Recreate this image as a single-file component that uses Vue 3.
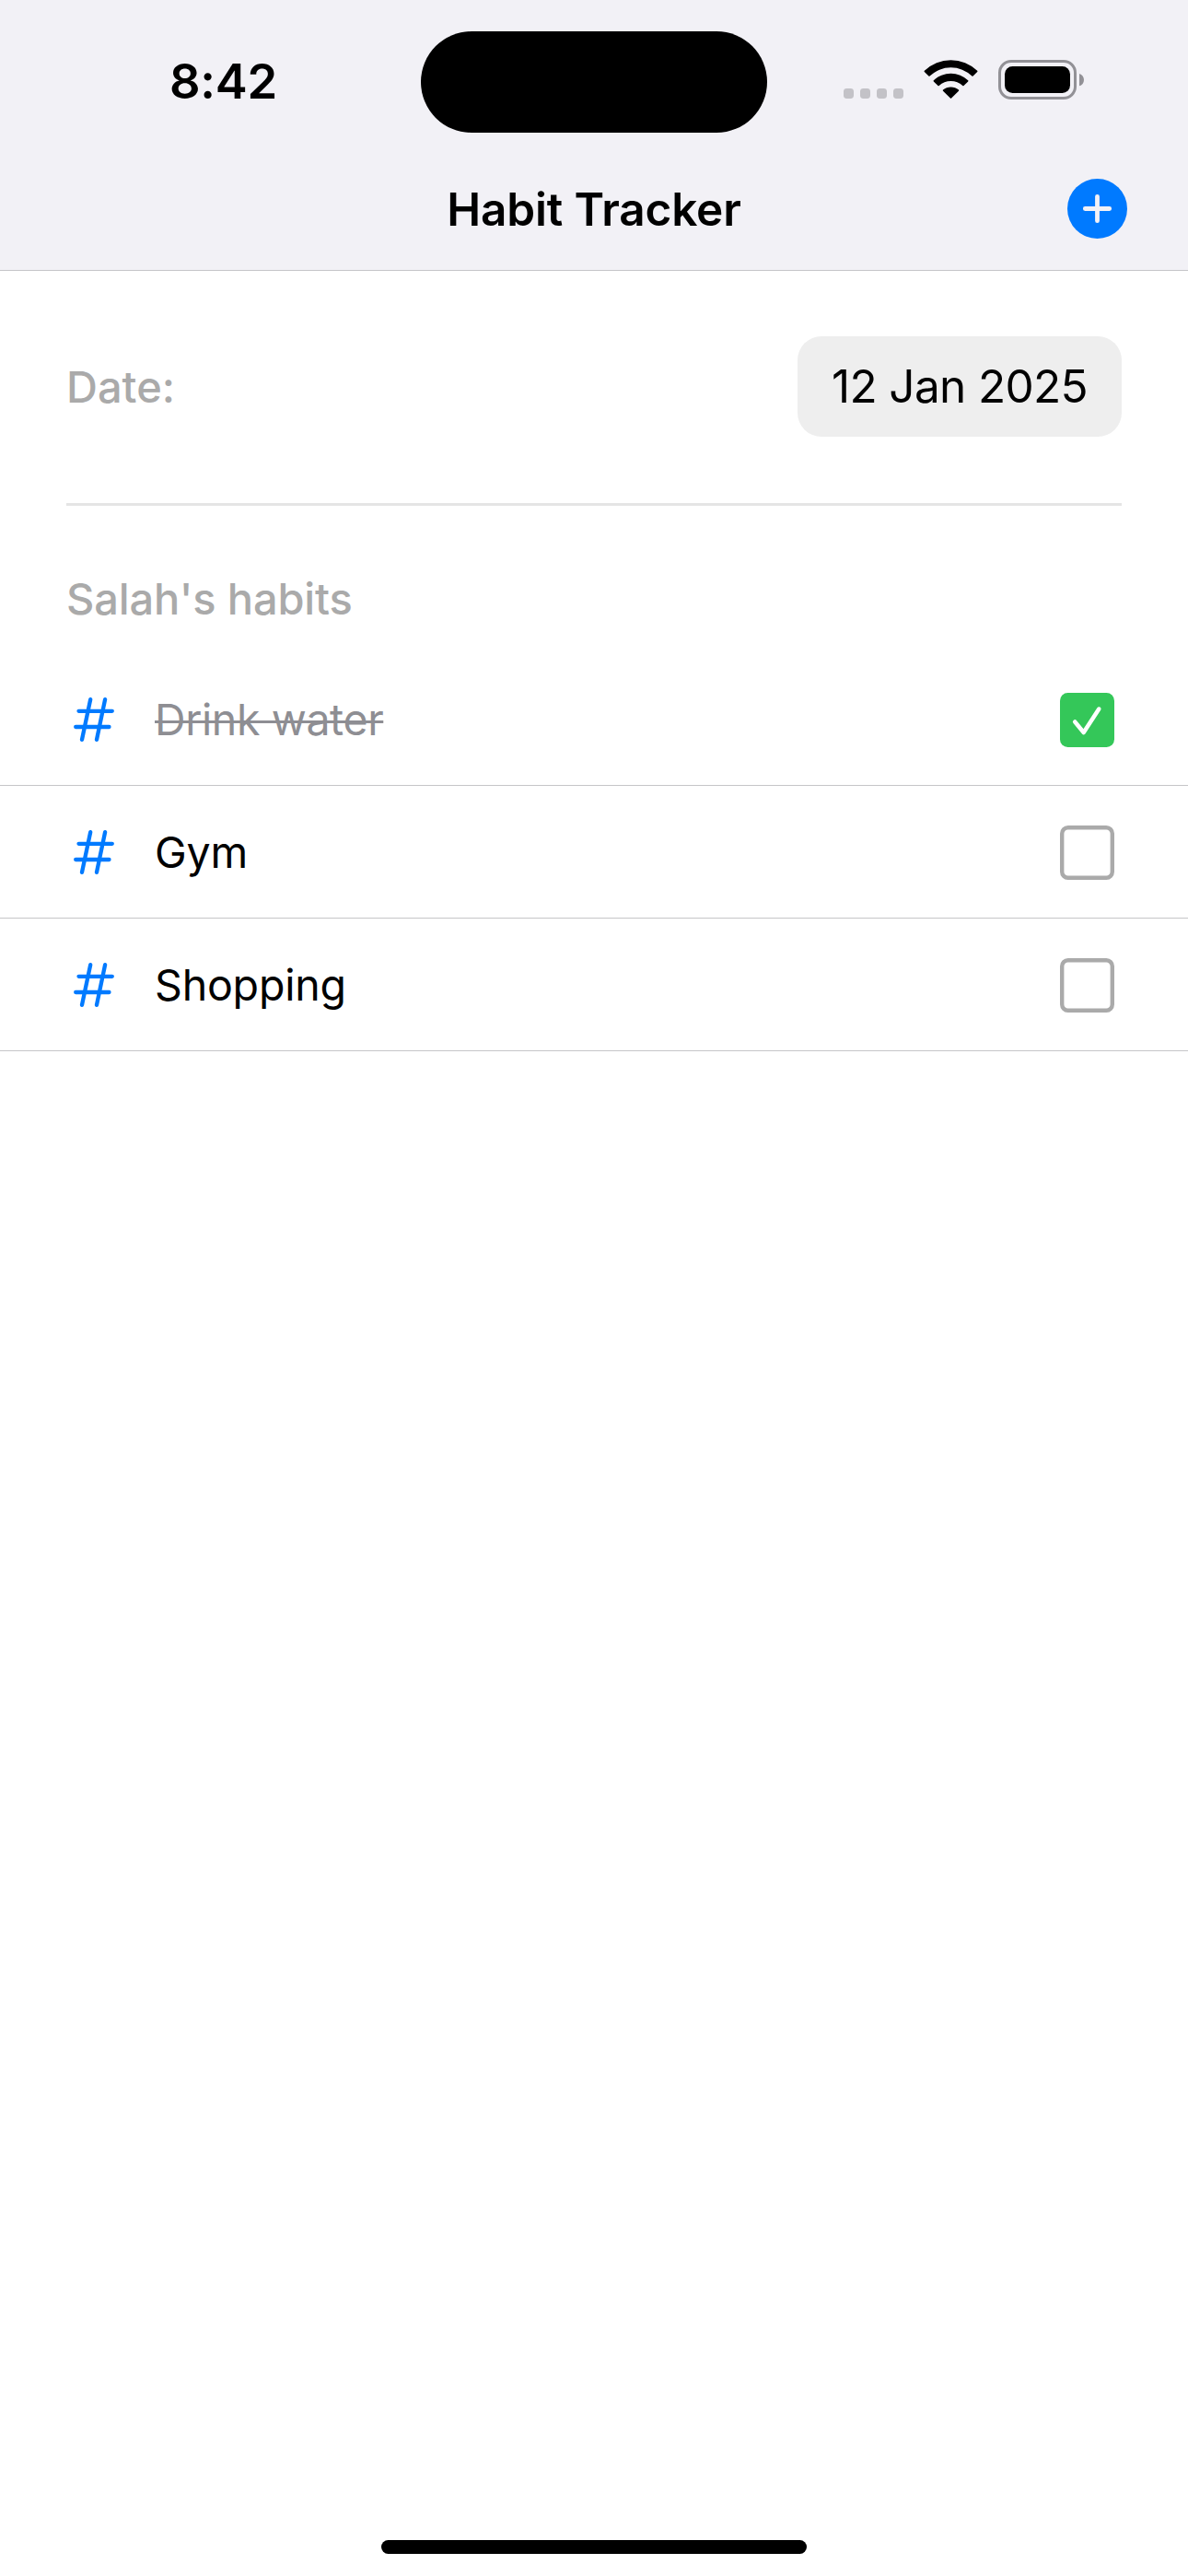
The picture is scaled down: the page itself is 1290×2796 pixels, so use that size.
<script setup>
import { ref } from 'vue'

const habits = ref([
  { name: 'Drink water', done: true },
  { name: 'Gym', done: false },
  { name: 'Shopping', done: false },
])
</script>

<template>
  <main class="screen">
    <header class="header">
      <div class="status">
        <div class="status-side"><span class="time">8:42</span></div>
        <div class="island"></div>
        <div class="status-side status-icons">
          <svg width="300" height="60" viewBox="0 0 300 60">
            <g fill="#c3c2c7">
              <rect x="16" y="36" width="11" height="11" rx="3.4" />
              <rect x="34" y="36" width="11" height="11" rx="3.4" />
              <rect x="52" y="36" width="11" height="11" rx="3.4" />
              <rect x="70" y="36" width="11" height="11" rx="3.4" />
            </g>
            <path d="M103.8 16.800a41.200 41.200 0 0 1 57.400 0q.5.600 0 1.200l-4.600 4.600q-.6.500-1.200 0a32.900 32.900 0 0 0-45.800 0q-.6.500-1.200 0l-4.600-4.600q-.5-.6 0-1.200z" />
            <path d="M113.800 27.200a27 27 0 0 1 37.400 0q.5.600 0 1.200l-4.700 4.600q-.6.500-1.200 0a18.800 18.800 0 0 0-25.600 0q-.6.500-1.200 0l-4.700-4.600q-.5-.6 0-1.200z" />
            <path d="M124 37.600a13 13 0 0 1 17 0q.6.600 0 1.200l-7.900 7.700q-.6.500-1.200 0l-7.900-7.700q-.6-.6 0-1.200z" />
            <rect x="185.500" y="6.500" width="82" height="40" rx="12.500" fill="none" stroke="#929196" stroke-width="3" />
            <rect x="191" y="12" width="71" height="29" rx="8.500" />
            <path d="M272 20c3 .8 5 3.500 5 6.700s-2 5.800-5 6.600z" fill="#929196" />
          </svg>
        </div>
      </div>
      <div class="nav">
        <h1 class="title">Habit Tracker</h1>
        <button class="add" aria-label="Add habit">
          <svg width="65" height="65" viewBox="0 0 65 65">
            <circle cx="32.500" cy="32.500" r="32.500" fill="#007aff" />
            <path d="M32.500 19.300v26.400M19.300 32.500h26.400" stroke="#f2f1f6" stroke-width="4.800" stroke-linecap="round" />
          </svg>
        </button>
      </div>
    </header>

    <section class="date-row">
      <span class="label">Date:</span>
      <span class="pill">12 Jan 2025</span>
    </section>

    <h2 class="label heading">Salah's habits</h2>

    <ul class="list">
      <li v-for="habit in habits" :key="habit.name" class="row">
        <svg class="hash" width="44" height="48" viewBox="0 0 44 48" fill="none" stroke="#007aff" stroke-width="4.300" stroke-linecap="round">
          <path d="M18.200 2.200 9 45.800M34.100 2.200 25 45.800M5.500 14.800h36.300M2.200 32h36.300" />
        </svg>
        <span class="name" :class="{ done: habit.done }">{{ habit.name }}</span>
        <svg v-if="habit.done" width="59" height="59" viewBox="0 0 59 59">
          <rect width="59" height="59" rx="8.500" fill="#34c759" />
          <path d="M16.200 31.500 25.700 43 42.300 17.500" fill="none" stroke="#fff" stroke-width="4.500" stroke-linecap="round" stroke-linejoin="round" />
        </svg>
        <svg v-else width="59" height="59" viewBox="0 0 59 59">
          <rect x="2.200" y="2.200" width="54.600" height="54.600" rx="6.500" fill="none" stroke="#aaa" stroke-width="4.400" />
        </svg>
      </li>
    </ul>

    <div class="home"></div>
  </main>
</template>

<style>
body {
  margin: 0;
  background: #fff;
}
</style>

<style scoped>
.screen {
  display: flex;
  flex-direction: column;
  width: 1290px;
  height: 2796px;
  background: #fff;
  color: #000;
  font-family: Inter, "Liberation Sans", sans-serif;
  overflow: hidden;
}
.header {
  box-sizing: border-box;
  height: 294px;
  flex: none;
  background: #f2f1f6;
  border-bottom: 1px solid #c5c5c9;
}
.status {
  display: flex;
  height: 160px;
  padding-top: 34px;
  box-sizing: border-box;
}
.status-side {
  width: 457px;
  height: 110px;
}
.time {
  display: block;
  margin: 22px 0 0 184px;
  font-size: 52.500px;
  line-height: 64px;
  font-weight: 600;
  letter-spacing: -0.300px;
}
.island {
  width: 376px;
  height: 110px;
  border-radius: 55px;
  background: #000;
}
.status-icons svg {
  display: block;
  margin: 26px 0 0 67px;
}
.nav {
  display: grid;
  grid-template-columns: 131px 1fr 131px;
  align-items: center;
  height: 133px;
}
.title {
  grid-column: 2;
  margin: 0;
  text-align: center;
  font-size: 49.500px;
  line-height: 60px;
  font-weight: 600;
  letter-spacing: -0.150px;
}
.add {
  display: block;
  width: 65px;
  height: 65px;
  padding: 0;
  border: 0;
  background: none;
}
.add svg {
  display: block;
}
.date-row {
  display: flex;
  align-items: center;
  justify-content: space-between;
  box-sizing: border-box;
  height: 255px;
  margin: 0 72px;
  padding-bottom: 1px;
  border-bottom: 3px solid #e5e5e5;
  flex: none;
}
.label {
  color: #aaa;
  font-size: 47px;
  font-weight: 500;
  line-height: 58px;
}
.pill {
  display: flex;
  align-items: center;
  justify-content: center;
  box-sizing: border-box;
  width: 352px;
  height: 109px;
  padding-bottom: 2px;
  border-radius: 26px;
  background: #eee;
  font-size: 49.500px;
  line-height: 60px;
  letter-spacing: -0.650px;
}
.heading {
  margin: 72px 72px 0;
  height: 88px;
  flex: none;
  letter-spacing: -0.150px;
}
.list {
  margin: 0;
  padding: 0;
  list-style: none;
}
.row {
  display: flex;
  align-items: center;
  box-sizing: border-box;
  height: 144px;
  padding: 1px 80px 0;
  border-bottom: 1px solid #c6c6c8;
}
.hash {
  flex: none;
}
.name {
  margin-left: 44px;
  margin-right: auto;
  font-size: 46.500px;
  line-height: 58px;
  letter-spacing: -0.200px;
}
.done {
  color: #8e8e93;
  letter-spacing: -0.400px;
  text-decoration: line-through;
  text-decoration-thickness: 3px;
}
.home {
  width: 462px;
  height: 15px;
  margin: auto auto 24px 414px;
  border-radius: 8px;
  background: #000;
}
</style>
